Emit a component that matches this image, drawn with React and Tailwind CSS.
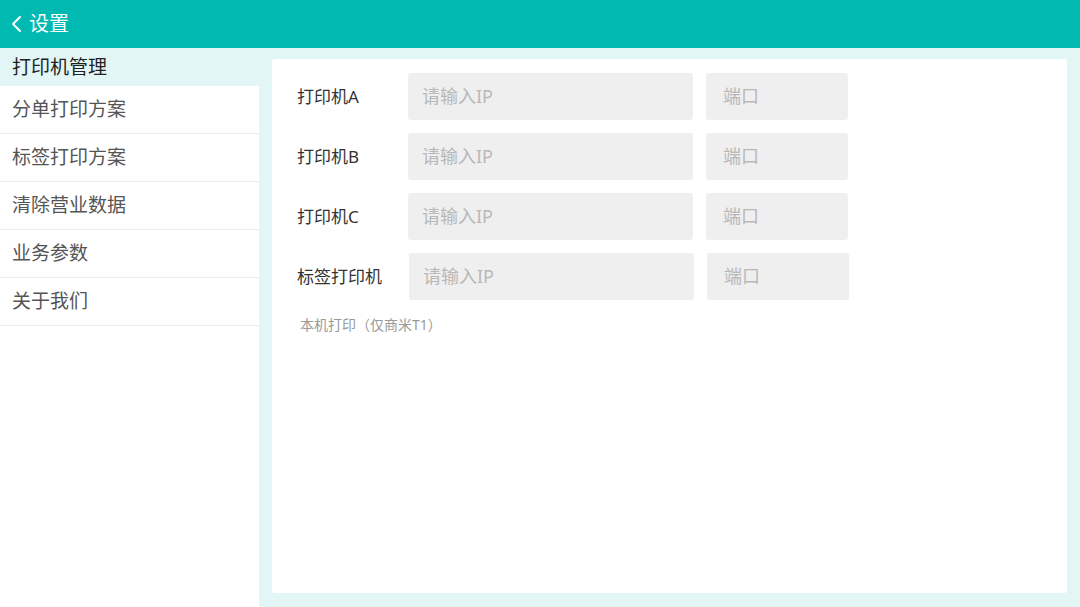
import React from "react";

const font = { fontFamily: '"Noto Sans", "Noto Sans CJK SC", sans-serif' };

function Row({ label, shift }) {
  return (
    <div className="flex items-center h-[47px]">
      <div className={`text-[17px] text-[#333] ${shift ? "w-[112px]" : "w-[111px]"}`}>{label}</div>
      <div className="w-[285px] h-[47px] bg-[#efefef] rounded-[3px] flex items-center pl-[14px] text-[18px] text-[#b8b8b8]">请输入IP</div>
      <div className="ml-[13px] w-[142px] h-[47px] bg-[#efefef] rounded-[3px] flex items-center pl-[17px] text-[18px] text-[#b8b8b8]">端口</div>
    </div>
  );
}

export default function App() {
  const items = ["分单打印方案", "标签打印方案", "清除营业数据", "业务参数", "关于我们"];
  return (
    <div className="w-[1080px] h-[607px] flex flex-col bg-[#e3f6f6] overflow-hidden" style={font}>
      <div className="h-[48px] bg-[#00b9b1] flex items-center pl-[10px] text-white shrink-0">
        <svg width="14" height="20" viewBox="0 0 14 20" fill="none" stroke="white" strokeWidth="2" strokeLinecap="round" strokeLinejoin="round">
          <path d="M10 3 L3 10 L10 17" />
        </svg>
        <span className="ml-[5px] text-[20px] leading-none">设置</span>
      </div>
      <div className="flex flex-1">
        <div className="w-[259px] flex flex-col">
          <div className="h-[38px] flex items-center pl-[12px] text-[19px] text-[#222] bg-[#e3f6f6]">打印机管理</div>
          <div className="flex-1 bg-white">
            {items.map((t) => (
              <div key={t} className="h-[48px] flex items-center pl-[12px] text-[19px] text-[#555] border-b border-[#ececec]">{t}</div>
            ))}
          </div>
        </div>
        <div className="flex-1 pl-[13px] pr-[13px] pt-[11px] pb-[14px]">
          <div className="h-full bg-white rounded-[3px] pl-[25px] pt-[14px] flex flex-col gap-[13px]">
            <Row label="打印机A" />
            <Row label="打印机B" />
            <Row label="打印机C" />
            <Row label="标签打印机" shift />
            <div className="text-[14px] text-[#9a9a9a] pl-[3px] mt-[1px]">本机打印（仅商米T1）</div>
          </div>
        </div>
      </div>
    </div>
  );
}
